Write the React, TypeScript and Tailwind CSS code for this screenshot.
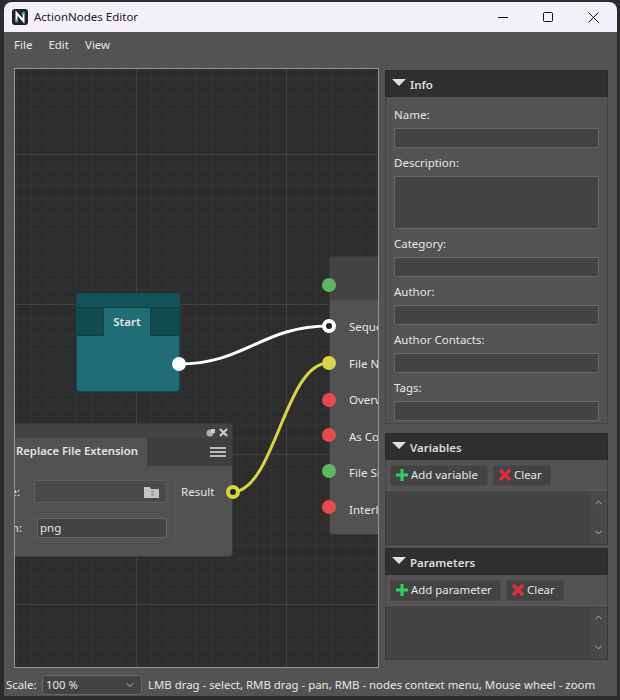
import { ChevronDown, ChevronUp } from "lucide-react";

const font = { fontFamily: '"Noto Sans", sans-serif' };

function Field({ label, tall }: { label: string; tall?: boolean }) {
  return (
    <div className="flex flex-col">
      <div className="h-[23px] pt-[1px] text-[11.5px] leading-[17px] text-[#e6e6e6]">{label}</div>
      <div className={`${tall ? "h-[53px]" : "h-[20px]"} border border-[#666666] bg-[#434343]`} />
    </div>
  );
}

function SectionHeader({ title }: { title: string }) {
  return (
    <div className="flex h-[27px] items-center gap-[4px] border border-[#2a2a2a] bg-[#2f2f2f] pl-[6px]">
      <div className="mb-[2px] h-0 w-0 border-x-[7px] border-t-[7px] border-x-transparent border-t-[#e0e0e0]" />
      <span className="pt-[2px] text-[11.5px] font-semibold text-[#dddddd]">{title}</span>
    </div>
  );
}

function Plus() {
  return (
    <svg width="14" height="14" viewBox="0 0 14 14">
      <path d="M5.500 1h3v4.500H13v3H8.500V13h-3V8.500H1v-3h4.500z" fill="#2ed15f" />
    </svg>
  );
}

function RedX() {
  return (
    <svg width="14" height="14" viewBox="0 0 14 14">
      <path d="M2 2l10 10M12 2L2 12" stroke="#e5293f" strokeWidth="3.500" />
    </svg>
  );
}

function Btn({ w, icon, label }: { w: string; icon: React.ReactNode; label: string }) {
  return (
    <div className={`${w} flex h-[21px] items-center gap-[2px] rounded-[2px] border border-[#4a4a4a] bg-[#434343] pl-[4px] text-[11.4px] text-[#e6e6e6]`}>
      {icon}
      <span>{label}</span>
    </div>
  );
}

function ListSection({ title, add, addW }: { title: string; add: string; addW: string }) {
  return (
    <div className="flex flex-col">
      <SectionHeader title={title} />
      <div className="flex h-[30px] items-center gap-[5px] border-x border-[#444444] pl-[4px]">
        <Btn w={addW} icon={<Plus />} label={add} />
        <Btn w="w-[58px]" icon={<RedX />} label="Clear" />
      </div>
      <div className="flex h-[55px] justify-end border border-[#3a3a3a] border-t-[#5e5e5e] bg-[#434343]">
        <div className="flex w-[17px] flex-col items-center justify-between bg-[#484848] py-[6px] text-[#bbbbbb]">
          <ChevronUp size={11} />
          <ChevronDown size={11} />
        </div>
      </div>
    </div>
  );
}

function Pin({ x, y, color, hollow }: { x: number; y: number; color: string; hollow?: boolean }) {
  return (
    <div
      className="absolute h-[14px] w-[14px] rounded-full"
      style={{ left: x - 7, top: y - 7, background: color }}
    >
      {hollow && <div className="m-[4px] h-[6px] w-[6px] rounded-full bg-[#222222]" />}
    </div>
  );
}

function Canvas() {
  return (
    <div className="relative w-[365px] shrink-0 overflow-hidden border border-[#8f969c] bg-[#2d2d2d]">
      <svg className="absolute left-0 top-0" width="365" height="600">
        <defs>
          <pattern id="minor" width="15" height="15" patternUnits="userSpaceOnUse" patternTransform="translate(1 10)">
            <rect width="1" height="15" fill="#333333" />
            <rect width="15" height="1" fill="#333333" />
          </pattern>
          <pattern id="major" width="150" height="150" patternUnits="userSpaceOnUse" patternTransform="translate(121 85)">
            <rect width="1" height="150" fill="#424242" />
            <rect width="150" height="1" fill="#424242" />
          </pattern>
        </defs>
        <rect width="365" height="600" fill="url(#minor)" />
        <rect width="365" height="600" fill="url(#major)" />
      </svg>

      {/* start node */}
      <div className="absolute left-[61px] top-[224px] h-[99px] w-[104px] overflow-hidden rounded-[4px] border border-[#124a4e] bg-[#206d76]">
        <div className="h-[14px] border-b border-[#0f4145] bg-[#125155]" />
        <div className="flex h-[28px]">
          <div className="w-[27px] border-b border-r border-[#0f4145] bg-[#104b4f]" />
          <div className="flex flex-1 items-center justify-center text-[11.5px] font-semibold text-[#e4e4e4]">Start</div>
          <div className="w-[29px] border-b border-l border-[#0f4145] bg-[#104b4f]" />
        </div>
      </div>

      {/* replace file extension node */}
      <div className="absolute left-[-60px] top-[354px] flex h-[134px] w-[278px] flex-col rounded-[4px] border border-[#3a3a3a] bg-[#525252]">
        <div className="flex h-[14px] items-center justify-end gap-[4px] bg-[#434343] pr-[4px] pt-[2px]">
          <svg width="9" height="9" viewBox="0 0 9 9">
            <circle cx="4" cy="5" r="3.500" fill="#b0b0b0" />
            <rect x="5" y="1" width="4" height="4" fill="#d0d0d0" />
          </svg>
          <svg width="9" height="9" viewBox="0 0 9 9">
            <path d="M1 1l7 7M8 1L1 8" stroke="#cccccc" strokeWidth="2.200" />
          </svg>
        </div>
        <div className="flex h-[28px] bg-[#3e3e3e]">
          <div className="w-[191px] whitespace-nowrap bg-[#525252] pl-[60px] text-[11.3px] font-semibold leading-[26px] text-[#e4e4e4]">Replace File Extension</div>
          <div className="flex flex-1 flex-col items-end gap-[2px] pr-[6px] pt-[9px]">
            <div className="h-[2px] w-[16px] bg-[#bbbbbb]" />
            <div className="h-[2px] w-[16px] bg-[#bbbbbb]" />
            <div className="h-[2px] w-[16px] bg-[#bbbbbb]" />
          </div>
        </div>
        <div className="flex flex-1 pt-[14px] text-[11.5px] text-[#e6e6e6]">
          <div className="flex h-[61px] w-[219px] flex-col gap-[15px] border-r border-[#5e5e5e]">
            <div className="flex h-[23px] shrink-0 items-center justify-end">
              <span className="mr-[14px]">e:</span>
              <div className="mr-[7px] flex h-[23px] w-[133px] items-center justify-end border border-[#5e5e5e] bg-[#4a4a4a] pr-[7px]">
                <svg width="15" height="12" viewBox="0 0 15 12">
                  <path d="M0 1h6l1 2h8v9H0z" fill="#c4c4c4" />
                  <rect x="7" y="4" width="3" height="6" fill="#a8a8a8" />
                </svg>
              </div>
            </div>
            <div className="flex h-[20px] shrink-0 items-center justify-end">
              <span className="mr-[15px]">n:</span>
              <div className="mr-[7px] h-[20px] w-[130px] border border-[#666666] bg-[#434343] pl-[2px] leading-[17px]">png</div>
            </div>
          </div>
          <div className="pl-[6px] leading-[23px]">Result</div>
        </div>
      </div>

      {/* right node */}
      <div className="absolute left-[314px] top-[187px] flex h-[279px] w-[120px] flex-col rounded-[4px] border border-[#3a3a3a] bg-[#525252]">
        <div className="h-[43px] shrink-0 bg-[#434343]" />
        <div className="flex flex-col gap-[16.500px] pl-[19px] pt-[17px] text-[11.5px] leading-[20px] text-[#e6e6e6]">
          <span>Sequence</span>
          <span>File Name</span>
          <span>Overwrite</span>
          <span>As Copy</span>
          <span>File Size</span>
          <span>Interlaced</span>
        </div>
      </div>

      <svg className="absolute left-0 top-0" width="365" height="600">
        <path d="M164 295C230 295 247 257 314 257" fill="none" stroke="#ffffff" strokeWidth="3" />
        <path d="M218 423C260 421 270 293 314 294" fill="none" stroke="#d7d743" strokeWidth="3" />
      </svg>
      <Pin x={164} y={295} color="#ffffff" />
      <Pin x={218} y={423} color="#d7d743" hollow />
      <Pin x={314} y={216} color="#5cb85c" />
      <Pin x={314} y={257} color="#ffffff" hollow />
      <Pin x={314} y={294} color="#d7d743" />
      <Pin x={314} y={331} color="#e64a4a" />
      <Pin x={314} y={366} color="#e64a4a" />
      <Pin x={314} y={402} color="#5cb85c" />
      <Pin x={314} y={438} color="#e64a4a" />
    </div>
  );
}

export default function App() {
  return (
    <div className="h-[700px] w-[620px] overflow-hidden bg-[#2b2b2b] pb-[4px] pl-[4px] pr-[3px] pt-[2px]" style={font}>
      <div className="flex h-full flex-col overflow-hidden rounded-t-[8px] bg-[#535353]">
        <div className="flex h-[30px] shrink-0 items-center bg-[#f3f0f7] pl-[8px] text-[11.5px] text-[#1a1a1a]">
          <svg width="16" height="16" viewBox="0 0 16 16">
            <rect width="16" height="16" rx="3" fill="#222222" />
            <path d="M4.500 12V4l7 8V4" fill="none" stroke="#ffffff" strokeWidth="2" />
            <circle cx="4.500" cy="12" r="1.500" fill="#22c08a" />
            <circle cx="11.500" cy="4" r="1.500" fill="#22c08a" />
          </svg>
          <span className="ml-[6px]">ActionNodes Editor</span>
          <div className="ml-auto flex items-center gap-[35px] pr-[18px]">
            <svg width="10" height="10" viewBox="0 0 10 10">
              <path d="M0 5.500h10" stroke="#111111" />
            </svg>
            <svg width="10" height="10" viewBox="0 0 10 10">
              <rect x="0.500" y="0.500" width="9" height="9" rx="1" fill="none" stroke="#111111" />
            </svg>
            <svg width="11" height="11" viewBox="0 0 11 11">
              <path d="M0.500 0.500l10 10M10.500 0.500l-10 10" stroke="#111111" />
            </svg>
          </div>
        </div>
        <div className="flex h-[26px] shrink-0 items-center gap-[16px] pl-[10px] text-[11.5px] text-[#e6e6e6]">
          <span>File</span>
          <span>Edit</span>
          <span>View</span>
        </div>
        <div className="mt-[10px] flex h-[600px] shrink-0 gap-[6px] pl-[10px]">
          <Canvas />
          <div className="flex w-[223px] flex-col pt-[2px]">
            <div className="flex h-[354px] flex-col">
              <SectionHeader title="Info" />
              <div className="flex flex-1 flex-col gap-[5px] border border-t-0 border-[#444444] px-[8px] pt-[8px]">
                <Field label="Name:" />
                <Field label="Description:" tall />
                <Field label="Category:" />
                <Field label="Author:" />
                <Field label="Author Contacts:" />
                <Field label="Tags:" />
              </div>
            </div>
            <div className="mt-[9px]">
              <ListSection title="Variables" add="Add variable" addW="w-[98px]" />
            </div>
            <div className="mt-[3px]">
              <ListSection title="Parameters" add="Add parameter" addW="w-[111px]" />
            </div>
          </div>
        </div>
        <div className="mt-[6px] flex h-[21px] shrink-0 items-center pl-[2px] text-[11.4px] text-[#e6e6e6]">
          <span className="w-[36px]">Scale:</span>
          <div className="flex h-[20px] w-[100px] items-center justify-between rounded-[3px] border border-[#666666] bg-[#434343] pl-[3px] pr-[5px]">
            <span>100 %</span>
            <ChevronDown size={12} className="text-[#bbbbbb]" />
          </div>
          <span className="ml-[6px] whitespace-nowrap">LMB drag - select, RMB drag - pan, RMB - nodes context menu, Mouse wheel - zoom</span>
        </div>
      </div>
    </div>
  );
}
